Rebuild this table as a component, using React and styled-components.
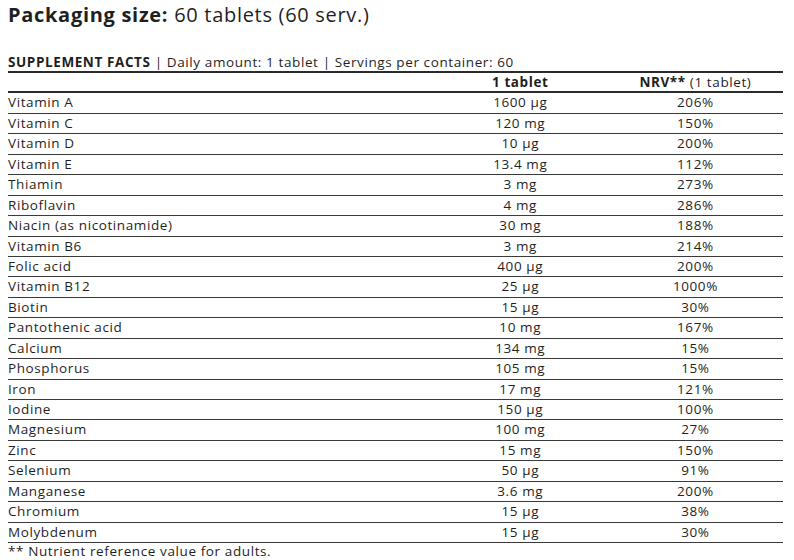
import React from 'react'
import styled, { createGlobalStyle } from 'styled-components'

const GlobalStyle = createGlobalStyle`
    body {
        margin: 0;
        background: #ffffff;
        color: #1f1f1f;
        font-family: "Open Sans", Lato, "Liberation Sans", sans-serif;
    }
`;

const Page = styled.div`
    padding: 0 11px 0 8px;
`;

const Title = styled.h1`
    margin: 0;
    padding-top: 3px;
    font-size: 20px;
    line-height: 24px;
    font-weight: 400;
    letter-spacing: 0.7px;
    color: #1f1f1f;
`;

const Strong = styled.span`
    font-weight: 700;
`;

const FactsLine = styled.div`
    margin-top: 27px;
    font-size: 13.5px;
    line-height: 16px;
    letter-spacing: 0.6px;
    padding-bottom: 1px;
    border-bottom: 2px solid #2b2b2b;
`;

const Row = styled.div`
    display: grid;
    grid-template-columns: 54.8% 22.6% 22.6%;
    align-items: center;
    box-sizing: border-box;
    height: 20.45px;
    padding-bottom: 2px;
    font-size: 13.5px;
    letter-spacing: 0.6px;
    border-bottom: ${p => (p.$head ? '2px solid #2b2b2b' : '1px solid #3a3a3a')};
`;

const Cell = styled.div`
    text-align: ${p => (p.$center ? 'center' : 'left')};
    font-weight: ${p => (p.$bold ? 700 : 400)};
    white-space: nowrap;
`;

const Footnote = styled.div`
    font-size: 13.5px;
    line-height: 15px;
    letter-spacing: 0.6px;
    margin-top: 1px;
`;

const nutrients = [
    ['Vitamin A', '1600 µg', '206%'],
    ['Vitamin C', '120 mg', '150%'],
    ['Vitamin D', '10 µg', '200%'],
    ['Vitamin E', '13.4 mg', '112%'],
    ['Thiamin', '3 mg', '273%'],
    ['Riboflavin', '4 mg', '286%'],
    ['Niacin (as nicotinamide)', '30 mg', '188%'],
    ['Vitamin B6', '3 mg', '214%'],
    ['Folic acid', '400 µg', '200%'],
    ['Vitamin B12', '25 µg', '1000%'],
    ['Biotin', '15 µg', '30%'],
    ['Pantothenic acid', '10 mg', '167%'],
    ['Calcium', '134 mg', '15%'],
    ['Phosphorus', '105 mg', '15%'],
    ['Iron', '17 mg', '121%'],
    ['Iodine', '150 µg', '100%'],
    ['Magnesium', '100 mg', '27%'],
    ['Zinc', '15 mg', '150%'],
    ['Selenium', '50 µg', '91%'],
    ['Manganese', '3.6 mg', '200%'],
    ['Chromium', '15 µg', '38%'],
    ['Molybdenum', '15 µg', '30%'],
];

const App = () => {
    return (
        <Page>
            <GlobalStyle />
            <Title><Strong>Packaging size:</Strong> 60 tablets (60 serv.)</Title>
            <FactsLine>
                <Strong>SUPPLEMENT FACTS</Strong> | Daily amount: 1 tablet | Servings per container: 60
            </FactsLine>
            <Row $head>
                <Cell></Cell>
                <Cell $center $bold>1 tablet</Cell>
                <Cell $center><Strong>NRV**</Strong> (1 tablet)</Cell>
            </Row>
            {nutrients.map(([name, amount, nrv]) => (
                <Row key={name}>
                    <Cell>{name}</Cell>
                    <Cell $center>{amount}</Cell>
                    <Cell $center>{nrv}</Cell>
                </Row>
            ))}
            <Footnote>** Nutrient reference value for adults.</Footnote>
        </Page>
    )
}

export default App
